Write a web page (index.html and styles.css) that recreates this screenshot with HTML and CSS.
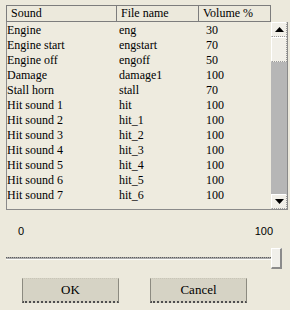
FILE: index.html
```html
<!DOCTYPE html>
<html lang="en">
<head>
    <meta charset="UTF-8">
    <title>Sounds</title>
    <link rel="stylesheet" href="styles.css">
</head>
<body>
    <div class="dialog">
        <div class="list">
            <div class="list-head">
                <div class="head-cell">Sound</div>
                <div class="head-cell">File name</div>
                <div class="head-cell last">Volume %</div>
            </div>
            <div class="list-body">
                <div class="rows">
                    <div class="row"><span>Engine</span><span>eng</span><span>30</span></div>
                    <div class="row"><span>Engine start</span><span>engstart</span><span>70</span></div>
                    <div class="row"><span>Engine off</span><span>engoff</span><span>50</span></div>
                    <div class="row"><span>Damage</span><span>damage1</span><span>100</span></div>
                    <div class="row"><span>Stall horn</span><span>stall</span><span>70</span></div>
                    <div class="row"><span>Hit sound 1</span><span>hit</span><span>100</span></div>
                    <div class="row"><span>Hit sound 2</span><span>hit_1</span><span>100</span></div>
                    <div class="row"><span>Hit sound 3</span><span>hit_2</span><span>100</span></div>
                    <div class="row"><span>Hit sound 4</span><span>hit_3</span><span>100</span></div>
                    <div class="row"><span>Hit sound 5</span><span>hit_4</span><span>100</span></div>
                    <div class="row"><span>Hit sound 6</span><span>hit_5</span><span>100</span></div>
                    <div class="row"><span>Hit sound 7</span><span>hit_6</span><span>100</span></div>
                </div>
                <div class="scrollbar">
                    <div class="scroll-btn">
                        <svg width="9" height="5" viewBox="0 0 9 5"><path d="M4.5 0 L9 5 L0 5 Z" fill="#000"/></svg>
                    </div>
                    <div class="scroll-thumb"></div>
                    <div class="scroll-track"></div>
                    <div class="scroll-btn">
                        <svg width="9" height="5" viewBox="0 0 9 5"><path d="M0 0 L9 0 L4.5 5 Z" fill="#000"/></svg>
                    </div>
                </div>
            </div>
        </div>

        <div class="range-labels">
            <span>0</span>
            <span>100</span>
        </div>
        <div class="slider">
            <div class="slider-track"></div>
            <div class="slider-thumb"></div>
        </div>

        <div class="buttons">
            <button class="button">OK</button>
            <button class="button">Cancel</button>
        </div>
    </div>
</body>
</html>
```

FILE: styles.css
```css
body {
    margin: 0;
    background-color: #ece9dc;
    font-family: "Liberation Serif", "Times New Roman", serif;
    font-size: 12px;
    color: #000;
}
.dialog {
    width: 290px;
    height: 310px;
    padding-top: 5px;
    box-sizing: border-box;
}
.list {
    margin-left: 6px;
    width: 282px;
}
.list-head {
    display: grid;
    grid-template-columns: 110px 82px 73px;
    height: 17px;
}
.head-cell {
    border: 1px solid #7d7d7d;
    border-right: none;
    padding-left: 4px;
    line-height: 15px;
}
.head-cell.last {
    border-right: 1px solid #7d7d7d;
}
.list-body {
    display: flex;
    height: 187px;
    border: 1px solid #8a8a8a;
    border-top: none;
    background-color: #eeebdf;
}
.rows {
    flex: 1;
    padding-top: 1px;
}
.row {
    display: grid;
    grid-template-columns: 109px 82px 73px;
    height: 15px;
    line-height: 15px;
    white-space: nowrap;
}
.row span:nth-child(2) {
    padding-left: 3px;
}
.row span:nth-child(3) {
    padding-left: 8px;
}
.scrollbar {
    width: 16px;
    display: flex;
    flex-direction: column;
}
.scroll-btn, .scroll-thumb {
    background-color: #f1efe8;
    border-left: 1px solid #fff;
    border-top: 1px solid #fff;
    border-right: 1px dotted #9a9a9a;
    border-bottom: 1px dotted #9a9a9a;
    box-sizing: border-box;
}
.scroll-btn {
    height: 15px;
    display: flex;
    align-items: center;
    justify-content: center;
}
.scroll-thumb {
    height: 25px;
}
.scroll-track {
    flex: 1;
    background-color: #b6b6b6;
}
.range-labels {
    display: flex;
    justify-content: space-between;
    margin-top: 14px;
    padding: 0 17px 0 18px;
    height: 14px;
    line-height: 14px;
    font-family: "Liberation Sans", Arial, sans-serif;
    font-size: 11px;
}
.slider {
    display: flex;
    align-items: center;
    margin: 10px 0 0 6px;
    width: 276px;
    height: 21px;
}
.slider-track {
    flex: 1;
    height: 1px;
    border-top: 1px dotted #5e5e5e;
    border-bottom: 1px solid #fbfbf7;
    background-color: #a9a9a9;
}
.slider-thumb {
    width: 11px;
    height: 21px;
    box-sizing: border-box;
    background-color: #f0efea;
    border-left: 1px solid #fff;
    border-top: 1px solid #fff;
    border-right: 2px solid #8b8b8b;
    border-bottom: 2px solid #8b8b8b;
}
.buttons {
    display: flex;
    gap: 31px;
    margin: 9px 0 0 22px;
}
.button {
    width: 97px;
    height: 25px;
    padding: 0;
    font-family: "Liberation Serif", "Times New Roman", serif;
    font-size: 13px;
    color: #000;
    background-color: #d6d3c5;
    border-top: 1px dotted #c9c6b8;
    border-left: 1px solid #8c8a80;
    border-right: 1px solid #8c8a80;
    border-bottom: 2px dotted #4f4f4f;
}
```
